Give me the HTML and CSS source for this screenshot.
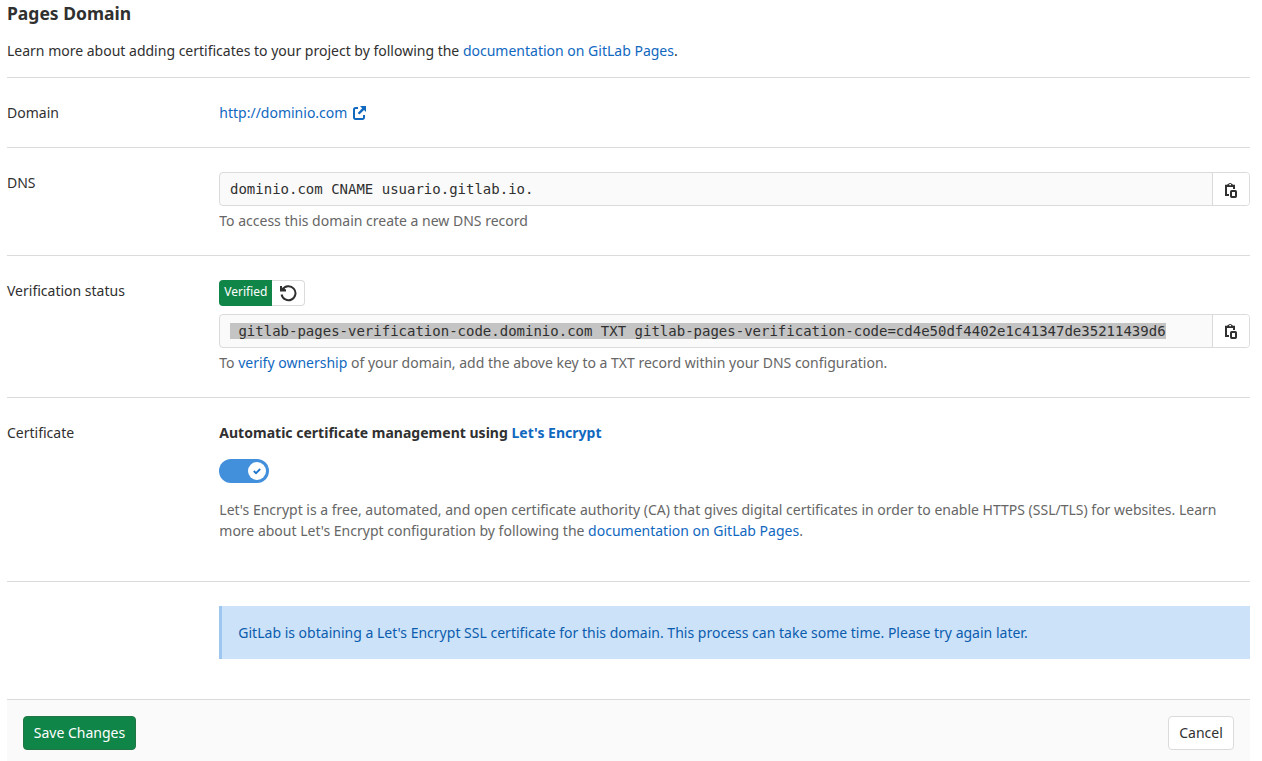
FILE: index.html
```html
<!DOCTYPE html>
<html lang="en">
<head>
<meta charset="utf-8">
<title>Pages Domain</title>
<link rel="stylesheet" href="styles.css">
</head>
<body>
<svg class="sprite" aria-hidden="true">
  <symbol id="clipboard" viewBox="0 0 16 16"><path d="M6 13H3V3.700h2M9 3.700h2V7" fill="none" stroke="currentColor" stroke-width="2"/><path fill-rule="evenodd" d="M4 5V2.500h.8a2.500 2.500 0 0 1 4.600 0h.6V5zM6.300 3.300h1.700v-1.400H6.300z"/><rect x="8" y="9" width="5" height="6" rx=".7" fill="none" stroke="currentColor" stroke-width="2"/></symbol>
</svg>
<main class="page">
  <h3 class="title">Pages Domain</h3>
  <p class="intro">Learn more about adding certificates to your project by following the <a href="#">documentation on GitLab Pages</a>.</p>

  <section class="row domain">
    <div class="label">Domain</div>
    <div class="content"><a class="domain-link" href="#"><span>http://dominio.com</span><svg width="16" height="16" viewBox="0 0 16 16"><path d="M7 3H4.500a1.500 1.500 0 0 0-1.500 1.500v8A1.500 1.500 0 0 0 4.500 14h7a1.500 1.500 0 0 0 1.500-1.500V10" fill="none" stroke="currentColor" stroke-width="2"/><path d="M9 1h6v6l-2-2-4.600 4.600-1.700-1.700L11.200 3.200z"/></svg></a></div>
  </section>

  <section class="row dns">
    <div class="label">DNS</div>
    <div class="content">
      <div class="field"><div class="value">dominio.com CNAME usuario.gitlab.io.</div><button class="copy" aria-label="Copy"><svg width="16" height="16"><use href="#clipboard"/></svg></button></div>
      <p class="hint">To access this domain create a new DNS record</p>
    </div>
  </section>

  <section class="row verification">
    <div class="label">Verification status</div>
    <div class="content">
      <div class="status"><span class="badge">Verified</span><button class="retry" aria-label="Retry"><svg width="18" height="18" viewBox="0 0 18 18"><path d="M3.600 5.400A7 7 0 1 1 2.600 10.500" fill="none" stroke="currentColor" stroke-width="2"/><path d="M1 2h2v1.500l4 2v2H1z"/></svg></button></div>
      <div class="field"><div class="value"><span class="selected">&nbsp;gitlab-pages-verification-code.dominio.com TXT gitlab-pages-verification-code=cd4e50df4402e1c41347de35211439d6</span></div><button class="copy" aria-label="Copy"><svg width="16" height="16"><use href="#clipboard"/></svg></button></div>
      <p class="hint">To <a href="#">verify ownership</a> of your domain, add the above key to a TXT record within your DNS configuration.</p>
    </div>
  </section>

  <section class="row certificate">
    <div class="label">Certificate</div>
    <div class="content">
      <div class="label strong">Automatic certificate management using <a href="#">Let's Encrypt</a></div>
      <button class="toggle" aria-label="Automatic certificate management"><span class="knob"><svg width="10" height="10" viewBox="0 0 10 10"><path d="M1.800 5l2.200 2.200 4.200-4.200" fill="none" stroke="currentColor" stroke-width="1.800"/></svg></span></button>
      <p class="description">Let's Encrypt is a free, automated, and open certificate authority (CA) that gives digital certificates in order to enable HTTPS (SSL/TLS) for websites. Learn more about Let's Encrypt configuration by following the <a href="#">documentation on GitLab Pages</a>.</p>
    </div>
  </section>

  <section class="row notice">
    <div class="content"><div class="alert">GitLab is obtaining a Let's Encrypt SSL certificate for this domain. This process can take some time. Please try again later.</div></div>
  </section>

  <footer class="actions"><button class="btn save">Save Changes</button><button class="btn cancel">Cancel</button></footer>
</main>
</body>
</html>
```
FILE: styles.css
```css
* { box-sizing: border-box; }
body { margin: 0; background: #fff; color: #303030; font: 14px/21px "Noto Sans", sans-serif; overflow: hidden; }
h3, p { margin: 0; }
a { color: #1068bf; text-decoration: none; }
svg { display: block; fill: currentColor; }
button { margin: 0; padding: 0; color: inherit; font: inherit; }
.sprite { position: absolute; width: 0; height: 0; }
.page { width: 1243px; margin-left: 7px; }
.title { padding-top: 1px; font-size: 17.500px; line-height: 24px; font-weight: 700; }
.intro { margin-top: 15px; margin-bottom: 16px; }
.row { display: grid; grid-template-columns: 212.300px 1fr; border-top: 1px solid #dbdbdb; padding-top: 24px; }
.label { line-height: 21px; }
.domain { height: 70px; }
.dns { height: 108px; }
.verification { height: 142px; }
.certificate { height: 184px; }
.notice { height: 118px; }
.domain-link { display: flex; align-items: center; gap: 4px; }
.domain-link svg { margin-top: 1px; }
.field { display: flex; height: 34px; border: 1px solid #dbdbdb; border-radius: 4px; background: #fafafa; overflow: hidden; }
.value { flex: 1; padding-left: 9.700px; font: 14px/32px "DejaVu Sans Mono", monospace; white-space: pre; }
.selected { background: #c4c4c4; }
.copy { display: flex; align-items: center; justify-content: center; width: 37px; border: 0; border-left: 1px solid #dbdbdb; background: #fff; }
.dns .copy { padding-top: 2px; }
.hint { margin-top: 4px; color: #666; }
.status { display: flex; height: 26px; margin-bottom: 8px; }
.badge { width: 53px; border-radius: 4px 0 0 4px; background: #108548; color: #fff; font-size: 12px; line-height: 24px; text-align: center; }
.retry { display: flex; align-items: center; justify-content: center; width: 33px; border: 1px solid #dbdbdb; border-left: 0; border-radius: 0 4px 4px 0; background: #fff; }
.strong { font-weight: 700; letter-spacing: 0.015px; }
.toggle { display: flex; align-items: center; justify-content: flex-end; width: 50px; height: 24px; margin-top: 16px; padding-right: 3px; border: 0; border-radius: 12px; background: #428fdc; }
.knob { display: flex; align-items: center; justify-content: center; width: 18px; height: 18px; border-radius: 50%; background: #fff; color: #1f75cb; }
.description { margin-top: 16px; color: #666; }
.notice .content { grid-column: 2; }
.alert { height: 53px; padding: 16px; border-left: 3px solid #9dc7f1; background: #cbe2f9; color: #0b5cad; letter-spacing: 0.007px; }
.actions { display: flex; justify-content: space-between; height: 62px; padding: 16px; border-top: 1px solid #dbdbdb; background: #fafafa; }
.btn { height: 34px; border: 1px solid #dbdbdb; border-radius: 4px; background: #fff; text-align: center; line-height: 20px; }
.save { width: 113px; border-color: #217645; background: #108548; color: #fff; }
.cancel { width: 66px; }
```
